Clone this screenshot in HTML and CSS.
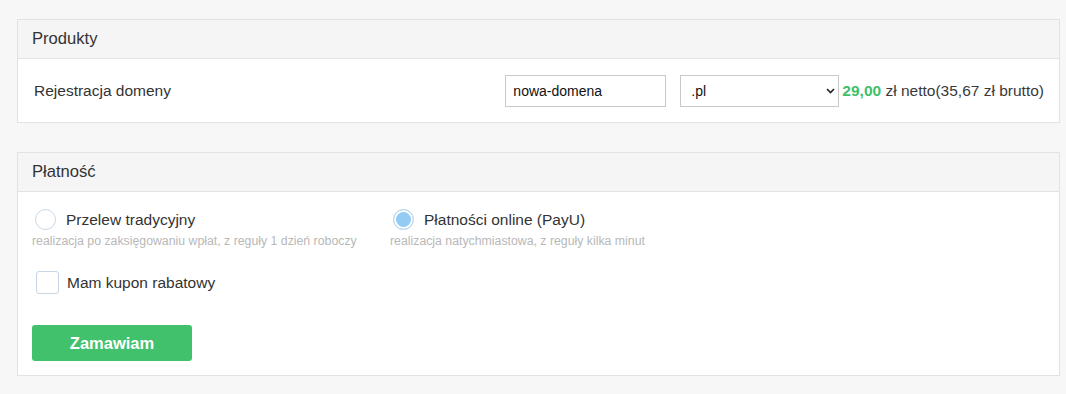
FILE: index.html
```html
<!DOCTYPE html>
<html lang="pl">
<head>
<meta charset="utf-8">
<link rel="stylesheet" href="styles.css">
</head>
<body>
<div class="page">
  <section class="panel">
    <div class="panel-head">Produkty</div>
    <div class="panel-body product-row">
      <div class="product-name">Rejestracja domeny</div>
      <input class="domain-input" type="text" value="nowa-domena">
      <div class="select-wrap">
        <select class="tld-select"><option>.pl</option></select>
        <svg class="chevron" width="9" height="6" viewBox="0 0 9 6"><path d="M1 1l3.5 3.5L8 1" fill="none" stroke="#222" stroke-width="1.6"/></svg>
      </div>
      <div class="price"><span class="price-net">29,00</span> zł netto(35,67 zł brutto)</div>
    </div>
  </section>

  <section class="panel panel-pay">
    <div class="panel-head">Płatność</div>
    <div class="panel-body pay-body">
      <div class="options">
        <div class="option">
          <div class="option-line"><span class="radio"></span><span class="option-label">Przelew tradycyjny</span></div>
          <div class="option-note">realizacja po zaksięgowaniu wpłat, z reguły 1 dzień roboczy</div>
        </div>
        <div class="option">
          <div class="option-line"><span class="radio radio-on"></span><span class="option-label">Płatności online (PayU)</span></div>
          <div class="option-note">realizacja natychmiastowa, z reguły kilka minut</div>
        </div>
      </div>
      <div class="coupon"><span class="checkbox"></span><span class="coupon-label">Mam kupon rabatowy</span></div>
      <button class="order-btn" type="button">Zamawiam</button>
    </div>
  </section>
</div>
</body>
</html>
```

FILE: styles.css
```css
* { box-sizing: border-box; }
html, body {
  margin: 0;
  background: #f7f7f7;
  font-family: "Liberation Sans", Arial, sans-serif;
  color: #333;
}
.page {
  padding: 19px 6px 0 17px;
}
.panel {
  background: #fff;
  border: 1px solid #e2e2e2;
}
.panel-pay {
  margin-top: 29px;
}
.panel-head {
  height: 39px;
  background: #f5f5f5;
  border-bottom: 1px solid #e2e2e2;
  padding: 0 14px;
  display: flex;
  align-items: center;
  font-size: 16.6px;
  color: #333;
}
.product-row {
  display: flex;
  align-items: center;
  padding: 16px 15px 15px 16px;
}
.product-name {
  flex: 1;
  font-size: 15.5px;
  color: #333;
}
.domain-input {
  width: 161px;
  height: 32px;
  border: 1px solid #c9c9c9;
  padding: 0 7px;
  font-family: inherit;
  font-size: 14px;
  color: #111;
  margin-right: 14px;
  outline: none;
}
.select-wrap {
  position: relative;
  width: 159px;
  height: 32px;
}
.tld-select {
  appearance: none;
  -webkit-appearance: none;
  width: 100%;
  height: 100%;
  border: 1px solid #c9c9c9;
  border-radius: 0;
  background: #fff;
  padding: 0 0 0 10px;
  font-family: inherit;
  font-size: 14px;
  color: #111;
}
.chevron {
  position: absolute;
  right: 4px;
  top: 13px;
}
.price {
  margin-left: 3px;
  font-size: 15.5px;
  color: #3a3a3a;
  white-space: nowrap;
}
.price-net {
  color: #3fbf68;
  font-weight: bold;
}
.pay-body {
  padding: 17px 14px 14px;
}
.options {
  display: flex;
}
.option {
  width: 358px;
}
.option-line {
  display: flex;
  align-items: center;
  padding-left: 3px;
}
.radio {
  width: 21px;
  height: 21px;
  border-radius: 50%;
  border: 1px solid #c6d6e6;
  background: #fff;
  margin-right: 10px;
}
.radio-on {
  background: #93cbf5;
  box-shadow: inset 0 0 0 2px #fff;
  border-color: #b9d4ea;
}
.option-label {
  font-size: 15.5px;
  color: #333;
}
.option-note {
  margin-top: 4px;
  font-size: 12.3px;
  color: #b8b8b8;
}
.coupon {
  display: flex;
  align-items: center;
  margin-top: 23px;
  padding-left: 4px;
}
.checkbox {
  width: 23px;
  height: 23px;
  border: 1px solid #c8d5e3;
  border-radius: 3px;
  background: #fff;
  margin-right: 8px;
}
.coupon-label {
  font-size: 15.5px;
  color: #333;
}
.order-btn {
  display: block;
  margin-top: 31px;
  width: 160px;
  height: 36px;
  border: 0;
  border-radius: 3px;
  background: #42c16c;
  color: #fff;
  font-family: inherit;
  font-size: 16.5px;
  font-weight: bold;
}
```
